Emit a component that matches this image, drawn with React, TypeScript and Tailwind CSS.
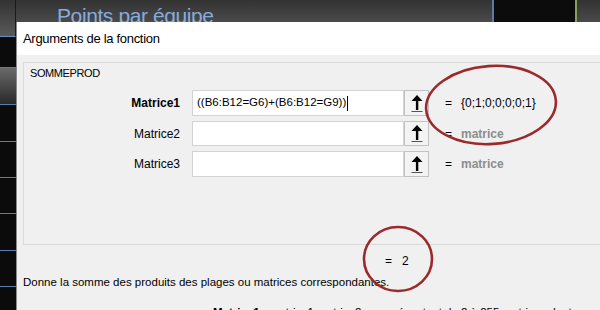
import React from 'react';

const font = { fontFamily: '"Liberation Sans", Arial, sans-serif' };

function CollapseIcon() {
  return (
    <svg width="12" height="17" viewBox="0 0 12 17">
      <polygon points="6,0 11.5,6 0.5,6" fill="#000" />
      <rect x="4.9" y="5" width="2.4" height="10" fill="#000" />
      <rect x="0.5" y="16" width="11" height="1" fill="#555" />
    </svg>
  );
}

type Arg = { label: string; value: string; result: string; bold?: boolean; placeholder?: boolean };

const args: Arg[] = [
  { label: 'Matrice1', value: '((B6:B12=G6)+(B6:B12=G9))', result: '{0;1;0;0;0;0;1}', bold: true },
  { label: 'Matrice2', value: '', result: 'matrice', placeholder: true },
  { label: 'Matrice3', value: '', result: 'matrice', placeholder: true },
];

function ArgRow({ arg, height }: { arg: Arg; height: string }) {
  return (
    <div className={`flex items-center ${height}`}>
      <div className={`w-[156px] text-right text-[12px] text-black ${arg.bold ? 'font-bold' : ''}`}>
        {arg.label}
      </div>
      <div className="ml-[12px] flex h-full w-[212px] items-center border border-[#d3d3d3] bg-white pl-[4px] text-[11.5px] text-black">
        {arg.value}
        {arg.value && <span className="ml-px h-[15px] w-px bg-black" />}
      </div>
      <div className="flex h-full w-[25px] items-center justify-center border border-[#c2c2c2] bg-[#f3f3f3]">
        <CollapseIcon />
      </div>
      <div className="ml-[16px] w-[16px] text-[12px] text-black">=</div>
      <div className={`text-[12px] ${arg.placeholder ? 'font-bold text-[#8d8d8d]' : 'text-black'}`}>
        {arg.result}
      </div>
    </div>
  );
}

export default function App() {
  const sideRows = [31, 37, 37, 36, 36, 37, 36, 30];

  return (
    <div className="relative h-[310px] w-[600px] overflow-hidden bg-[#0b0b0b]" style={font}>
      {/* Excel sheet behind the dialog */}
      <div className="flex h-[37px] bg-gradient-to-b from-[#333333] to-[#5a5a5a]">
        <div className="w-[16px] border-r border-[#1a1a1a] border-b border-b-[#6b8cb8]" />
        <div className="w-[476px] pl-[41px] pt-[3px] text-[21px] leading-[26px] tracking-[-0.4px] text-[#86acde]">
          Points par équipe
        </div>
        <div className="w-[85px] border-x-2 border-l-[#5d7aa3] border-r-[#86a25a] bg-[#0c0c0c]" />
        <div className="flex-1" />
      </div>
      <div className="flex w-[16px] flex-col">
        {sideRows.map((h, i) => (
          <div
            key={i}
            className={`border-b border-[#5a7eae] ${i === 1 ? 'bg-gradient-to-b from-[#6a6a6a] to-[#2a2a2a]' : 'bg-[#0b0b0b]'}`}
            style={{ height: h }}
          />
        ))}
      </div>

      {/* Function arguments dialog */}
      <div className="absolute left-[16px] top-[22px] flex h-[300px] w-[600px] flex-col border-l border-[#8a8a8a]">
        <div className="flex h-[33px] items-center bg-white pl-[6px] text-[13px] tracking-[-0.3px] text-black">
          Arguments de la fonction
        </div>
        <div className="flex flex-1 flex-col bg-[#f0f0f0] pl-[6px] pt-[7px]">
          <div className="flex h-[183px] flex-col border border-[#dadada]">
            <div className="pl-[6px] pt-[3px] text-[11px] leading-[14px] tracking-[-0.4px] text-black">SOMMEPROD</div>
            <div className="mt-[10px] flex flex-col gap-[5px]">
              <ArgRow arg={args[0]} height="h-[26px]" />
              <ArgRow arg={args[1]} height="h-[25px]" />
              <ArgRow arg={args[2]} height="h-[26px]" />
            </div>
          </div>
          <div className="ml-[362px] mt-[9px] flex h-[14px] items-center text-[12px] text-black">
            <span className="w-[17px]">=</span>
            <span>2</span>
          </div>
          <div className="mt-[7px] text-[11.5px] leading-[14px] text-black">
            Donne la somme des produits des plages ou matrices correspondantes.
          </div>
          <div className="ml-[190px] mt-[16px] whitespace-nowrap text-[11.5px] leading-[14px] text-black">
            <span className="font-bold">Matrice1:</span>&nbsp;&nbsp;matrice1;matrice2;... représentent de 2 à 255 matrices dont vous voulez
          </div>
        </div>
      </div>

      {/* Red annotation circles */}
      <svg className="pointer-events-none absolute left-0 top-0" width="600" height="310">
        <ellipse cx="491" cy="105" rx="65" ry="39" fill="none" stroke="#9b2a2c" strokeWidth="2.6" transform="rotate(-4 491 105)" />
        <ellipse cx="398" cy="259" rx="34" ry="32" fill="none" stroke="#9b2a2c" strokeWidth="2.6" />
      </svg>
    </div>
  );
}
